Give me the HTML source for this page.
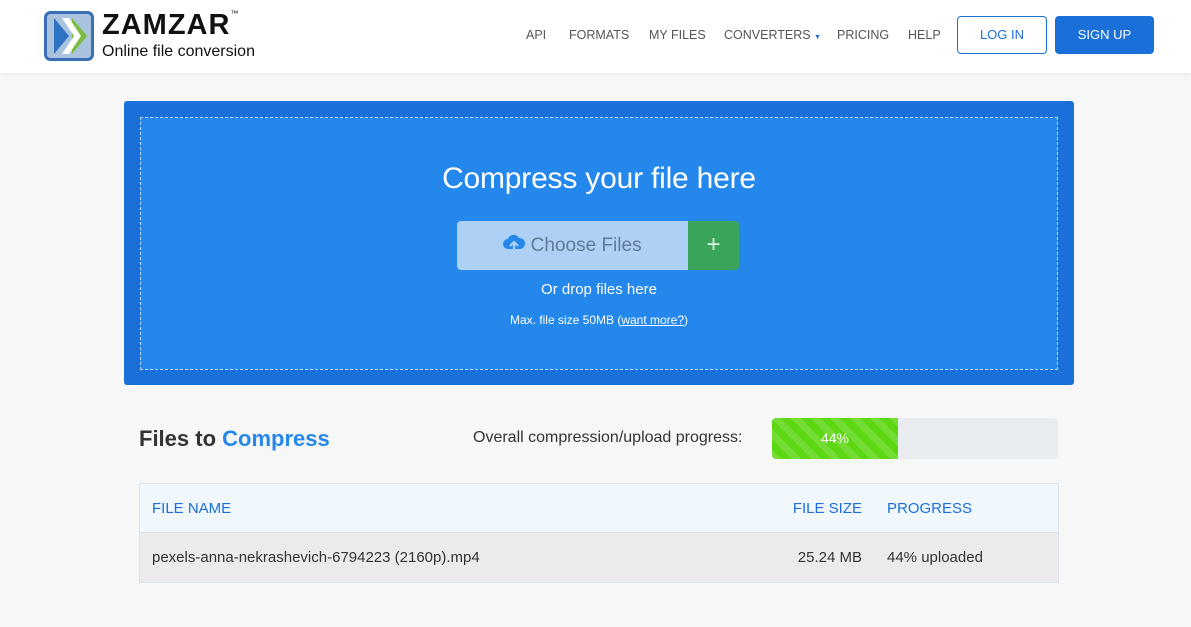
<!DOCTYPE html>
<html><head><meta charset="utf-8"><style>
*{box-sizing:border-box;margin:0;padding:0}
body{width:1191px;height:627px;background:#f7f7f7;font-family:"Liberation Sans",sans-serif;position:relative;overflow:hidden}
.hdr{position:absolute;left:0;top:0;width:1191px;height:73px;background:#fff;box-shadow:0 1px 4px rgba(0,0,0,.08)}
.nav{position:absolute;top:28px;font-size:12.5px;color:#555}
.btn{position:absolute;top:16px;height:38px;border-radius:4px;font-size:13px;line-height:37px;text-align:center}
.box{position:absolute;left:124px;top:101px;width:950px;height:284px;background:#1a6fd8;border-radius:3px}
.inner{position:absolute;left:16px;top:16px;width:918px;height:253px;background:#2487ec;border:1px dashed #bcd9f7}
.c{position:absolute;width:100%;text-align:center;color:#fff}
</style></head><body>
<div class="hdr">
<svg style="position:absolute;left:44px;top:11px" width="50" height="50" viewBox="0 0 50 50">
<rect x="1.5" y="1.5" width="47" height="47" rx="5" fill="#a9c3de" stroke="#3a6fb5" stroke-width="3"/>
<polygon points="10,7 25,25 10,43" fill="#2f74c4"/>
<polygon points="28,7 43,25 28,43" fill="#7dbb3c"/>
<polygon points="18,7 25,7 37,25 25,43 18,43 30,25" fill="#fff"/></svg>
<div style="position:absolute;left:102px;top:9px;font-size:29px;font-weight:bold;letter-spacing:1px;color:#111">ZAMZAR<span style="font-size:8px;vertical-align:top;font-weight:normal">™</span></div>
<div style="position:absolute;left:102px;top:43px;font-size:16px;color:#111">Online file conversion</div>
<div class="nav" style="left:526px">API</div>
<div class="nav" style="left:569px">FORMATS</div>
<div class="nav" style="left:649px">MY FILES</div>
<div class="nav" style="left:724px">CONVERTERS <span style="font-size:7px;color:#1a6fd8">▼</span></div>
<div class="nav" style="left:837px">PRICING</div>
<div class="nav" style="left:908px">HELP</div>
<div class="btn" style="left:957px;width:90px;border:1px solid #1a6fd8;color:#1a6fd8;line-height:36px">LOG IN</div>
<div class="btn" style="left:1055px;width:99px;background:#1a6fd8;color:#fff">SIGN UP</div>
</div>
<div class="box"><div class="inner">
<div class="c" style="top:44px;font-size:30px;letter-spacing:-0.2px">Compress your file here</div>
<div style="position:absolute;left:316px;top:103px;width:231px;height:49px;background:#aed0f4;border-radius:4px 0 0 4px;color:#5f7a98;font-size:19px;line-height:49px;text-align:center">
<svg width="22" height="20" viewBox="0 0 22 20" style="vertical-align:-3px"><path d="M5 15a5 5 0 0 1 0-10 6 6 0 0 1 11-1 5 5 0 0 1 1 11z" fill="#2487ec"/><path d="M11 19V9M7 12l4-4 4 4" stroke="#aed0f4" stroke-width="2.2" fill="none"/></svg> Choose Files</div>
<div style="position:absolute;left:547px;top:103px;width:51px;height:49px;background:#3ba55c;border-radius:0 4px 4px 0;color:#d8f0de;font-size:24px;line-height:47px;text-align:center">+</div>
<div class="c" style="top:163px;font-size:15px">Or drop files here</div>
<div class="c" style="top:195px;font-size:12px">Max. file size 50MB (<u>want more?</u>)</div>
</div></div>
<div style="position:absolute;left:139px;top:426px;font-size:22px;font-weight:bold;color:#333">Files to <span style="color:#2487ec">Compress</span></div>
<div style="position:absolute;left:473px;top:429px;font-size:16px;color:#333">Overall compression/upload progress:</div>
<div style="position:absolute;left:772px;top:418px;width:286px;height:41px;background:#e9ecef;border-radius:4px;overflow:hidden">
<div style="width:126px;height:41px;background:#5cd712 repeating-linear-gradient(45deg,rgba(255,255,255,.15) 0 7px,transparent 7px 14px);color:#fff;font-size:14px;line-height:41px;text-align:center">44%</div></div>
<div style="position:absolute;left:139px;top:483px;width:920px;height:100px;border:1px solid #dde3ea">
<div style="height:49px;background:#f0f7fd;border-bottom:1px solid #dde3ea;color:#1a6fd8;font-size:15px;position:relative">
<span style="position:absolute;left:12px;top:16px">FILE NAME</span><span style="position:absolute;right:196px;top:16px">FILE SIZE</span><span style="position:absolute;left:747px;top:16px">PROGRESS</span></div>
<div style="height:49px;background:#ebebeb;color:#333;font-size:15px;position:relative">
<span style="position:absolute;left:12px;top:16px">pexels-anna-nekrashevich-6794223 (2160p).mp4</span><span style="position:absolute;right:196px;top:16px">25.24 MB</span><span style="position:absolute;left:747px;top:16px">44% uploaded</span></div>
</div>
</body></html>
